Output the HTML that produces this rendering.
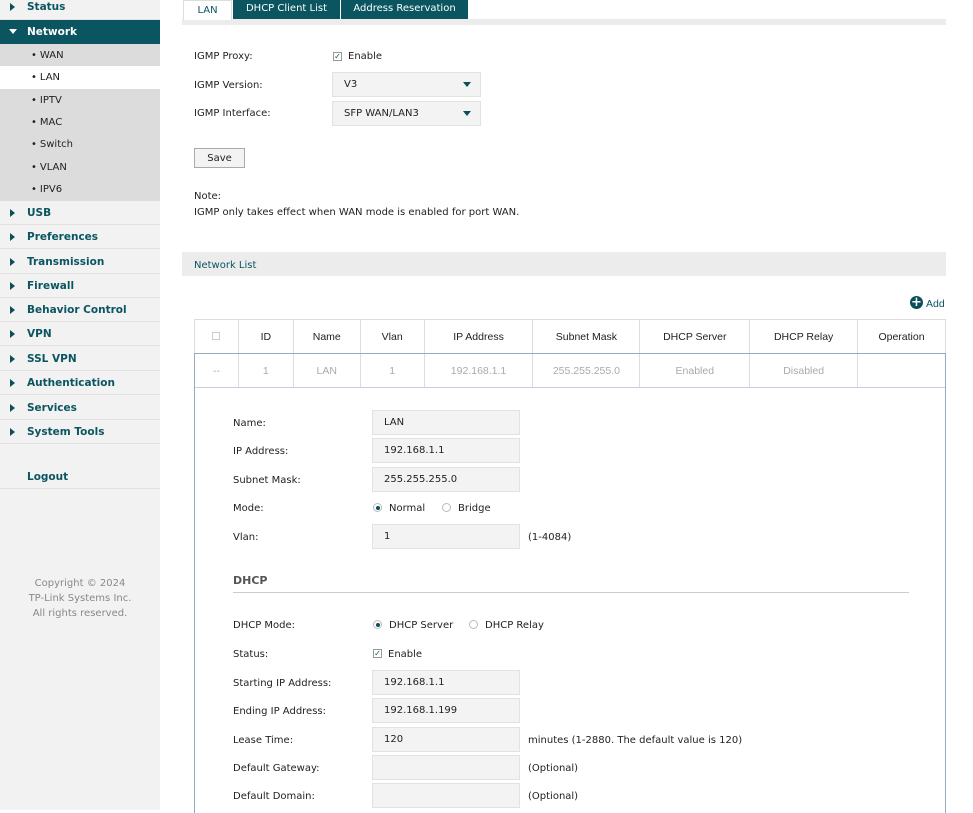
<!DOCTYPE html>
<html><head><meta charset="utf-8"><style>
*{margin:0;padding:0;box-sizing:border-box}
body{width:973px;height:810px;overflow:hidden;background:#fff;font-family:"DejaVu Sans","Liberation Sans",sans-serif;font-size:10px;color:#222;position:relative}
.a{position:absolute;white-space:nowrap}
#sb{position:absolute;left:0;top:0;width:160px;height:810px;background:#f2f2f2}
.mi{position:absolute;left:0;width:160px;height:24px;border-bottom:1px solid #e2e2e2;color:#0a5560;font-weight:bold;font-size:10.5px;line-height:24px;padding-left:27px}
.mi:before{content:"";position:absolute;left:10px;top:8px;border-left:5px solid #0a4f5a;border-top:4px solid transparent;border-bottom:4px solid transparent}
.mi.nb:before{display:none}
.mi.open:before{left:9px;top:9px;border-left:4px solid transparent;border-right:4px solid transparent;border-top:5px solid #fff;border-bottom:0}
.si{position:absolute;left:0;width:160px;height:23px;background:#dcdcdc;line-height:23px;padding-left:31px;font-size:10px;color:#222}
.si:before{content:"•";margin-right:3px}
.lbl{position:absolute;font-size:10px;margin-top:1px}
.inp{position:absolute;width:148px;height:25px;background:#f3f3f3;border:1px solid #e2e2e2;padding-left:11px;line-height:24px;font-size:10px}
.sel{position:absolute;width:149px;height:25px;background:#f3f3f3;border:1px solid #e2e2e2;padding-left:11px;line-height:24px;font-size:10px}
.sel:after{content:"";position:absolute;right:9px;top:9px;border-top:5px solid #0a4f5a;border-left:4px solid transparent;border-right:4px solid transparent}
.cb{position:absolute;width:9px;height:9px;border:1px solid #999;background:#fff;font-size:8px;line-height:7px;text-align:center;color:#0a4f5a}
.rd{position:absolute;width:9px;height:9px;border:1px solid #bbb;border-radius:50%;background:#fff}
.rd.on:after{content:"";position:absolute;left:1.5px;top:1.5px;width:4px;height:4px;border-radius:50%;background:#0a4f5a}
table{position:absolute;left:194px;top:319px;width:752px;border-collapse:collapse;font-family:"Liberation Sans",sans-serif;font-size:10.5px;text-align:center}
td{border:1px solid #ddd;height:34px}
tr.d td{color:#aaa;border-bottom:1px solid #ccd}
</style></head><body>
<div id="sb">
<div class="mi" style="top:-5px;height:25px">Status</div>
<div class="mi open" style="top:20px;background:#0a5560;color:#fff;border:0">Network</div>
<div class="si" style="top:44px">WAN</div>
<div class="si" style="top:66px;background:#fff">LAN</div>
<div class="si" style="top:89px">IPTV</div>
<div class="si" style="top:111px">MAC</div>
<div class="si" style="top:133px">Switch</div>
<div class="si" style="top:156px">VLAN</div>
<div class="si" style="top:178px">IPV6</div>
<div class="mi" style="top:201px">USB</div>
<div class="mi" style="top:225px">Preferences</div>
<div class="mi" style="top:250px">Transmission</div>
<div class="mi" style="top:274px">Firewall</div>
<div class="mi" style="top:298px">Behavior Control</div>
<div class="mi" style="top:322px">VPN</div>
<div class="mi" style="top:347px">SSL VPN</div>
<div class="mi" style="top:371px">Authentication</div>
<div class="mi" style="top:396px">Services</div>
<div class="mi" style="top:420px">System Tools</div>
<div class="mi nb" style="top:465px">Logout</div>
<div class="a" style="top:576px;width:160px;text-align:center;color:#888;font-size:10px;line-height:15px;white-space:normal">Copyright © 2024<br>TP-Link Systems Inc.<br>All rights reserved.</div>
</div>
<!-- tabs -->
<div class="a" style="left:182px;top:19px;width:764px;height:6px;background:#ececec"></div>
<div class="a" style="left:183px;top:0;width:49px;height:20px;background:#fff;border:1px solid #ddd;border-bottom:0;text-align:center;line-height:19px;color:#0a5560">LAN</div>
<div class="a" style="left:233px;top:0;width:107px;height:19px;background:#0a5560;color:#fff;text-align:center;line-height:17px">DHCP Client List</div>
<div class="a" style="left:341px;top:0;width:127px;height:19px;background:#0a5560;color:#fff;text-align:center;line-height:17px">Address Reservation</div>
<div class="lbl" style="left:194px;top:50px">IGMP Proxy:</div>
<div class="cb" style="left:333px;top:52px">✓</div><div class="lbl" style="left:348px;top:50px">Enable</div>
<div class="lbl" style="left:194px;top:79px">IGMP Version:</div>
<div class="sel" style="left:332px;top:72px">V3</div>
<div class="lbl" style="left:194px;top:107px">IGMP Interface:</div>
<div class="sel" style="left:332px;top:101px">SFP WAN/LAN3</div>
<div class="a" style="left:194px;top:148px;width:51px;height:20px;background:#f3f3f3;border:1px solid #aaa;text-align:center;line-height:19px">Save</div>
<div class="lbl" style="left:194px;top:190px">Note:</div>
<div class="lbl" style="left:194px;top:206px">IGMP only takes effect when WAN mode is enabled for port WAN.</div>
<div class="a" style="left:182px;top:252px;width:764px;height:24px;background:#ececec;color:#0a5560;line-height:27px;padding-left:12px">Network List</div>
<div class="a" style="left:910px;top:296px;width:13px;height:13px;border-radius:50%;background:#0a4f5a;color:#fff;font-weight:bold;font-size:13px;line-height:13px;text-align:center">+</div>
<div class="lbl" style="left:926px;top:297px;color:#0a5560;font-family:'Liberation Sans',sans-serif;font-size:10.5px">Add</div>
<table>
<colgroup><col style="width:44px"><col style="width:55px"><col style="width:67px"><col style="width:64px"><col style="width:109px"><col style="width:107px"><col style="width:110px"><col style="width:108px"><col style="width:88px"></colgroup>
<tr><td><span style="display:inline-block;width:8px;height:8px;border:1px solid #ccc"></span></td><td>ID</td><td>Name</td><td>Vlan</td><td>IP Address</td><td>Subnet Mask</td><td>DHCP Server</td><td>DHCP Relay</td><td>Operation</td></tr>
<tr class="d"><td>--</td><td>1</td><td>LAN</td><td>1</td><td>192.168.1.1</td><td>255.255.255.0</td><td>Enabled</td><td>Disabled</td><td></td></tr>
</table>
<div class="a" style="left:194px;top:353px;width:752px;height:460px;border-left:1px solid #9ab;border-right:1px solid #9ab;border-top:1px solid #9ab"></div>
<div class="lbl" style="left:233px;top:417px">Name:</div><div class="inp" style="left:372px;top:410px">LAN</div>
<div class="lbl" style="left:233px;top:445px">IP Address:</div><div class="inp" style="left:372px;top:438px">192.168.1.1</div>
<div class="lbl" style="left:233px;top:474px">Subnet Mask:</div><div class="inp" style="left:372px;top:467px">255.255.255.0</div>
<div class="lbl" style="left:233px;top:502px">Mode:</div>
<div class="rd on" style="left:373px;top:503px"></div><div class="lbl" style="left:389px;top:502px">Normal</div>
<div class="rd" style="left:442px;top:503px"></div><div class="lbl" style="left:458px;top:502px">Bridge</div>
<div class="lbl" style="left:233px;top:531px">Vlan:</div><div class="inp" style="left:372px;top:524px">1</div><div class="lbl" style="left:528px;top:531px">(1-4084)</div>
<div class="a" style="left:233px;top:574px;font-weight:bold;font-size:11px;color:#555">DHCP</div>
<div class="a" style="left:233px;top:592px;width:676px;height:1px;background:#ccc"></div>
<div class="lbl" style="left:233px;top:619px">DHCP Mode:</div>
<div class="rd on" style="left:373px;top:620px"></div><div class="lbl" style="left:389px;top:619px">DHCP Server</div>
<div class="rd" style="left:469px;top:620px"></div><div class="lbl" style="left:485px;top:619px">DHCP Relay</div>
<div class="lbl" style="left:233px;top:648px">Status:</div>
<div class="cb" style="left:373px;top:649px">✓</div><div class="lbl" style="left:388px;top:648px">Enable</div>
<div class="lbl" style="left:233px;top:677px">Starting IP Address:</div><div class="inp" style="left:372px;top:670px">192.168.1.1</div>
<div class="lbl" style="left:233px;top:705px">Ending IP Address:</div><div class="inp" style="left:372px;top:698px">192.168.1.199</div>
<div class="lbl" style="left:233px;top:734px">Lease Time:</div><div class="inp" style="left:372px;top:727px">120</div><div class="lbl" style="left:528px;top:734px">minutes (1-2880. The default value is 120)</div>
<div class="lbl" style="left:233px;top:762px">Default Gateway:</div><div class="inp" style="left:372px;top:755px"></div><div class="lbl" style="left:528px;top:762px">(Optional)</div>
<div class="lbl" style="left:233px;top:790px">Default Domain:</div><div class="inp" style="left:372px;top:783px"></div><div class="lbl" style="left:528px;top:790px">(Optional)</div>
</body></html>
